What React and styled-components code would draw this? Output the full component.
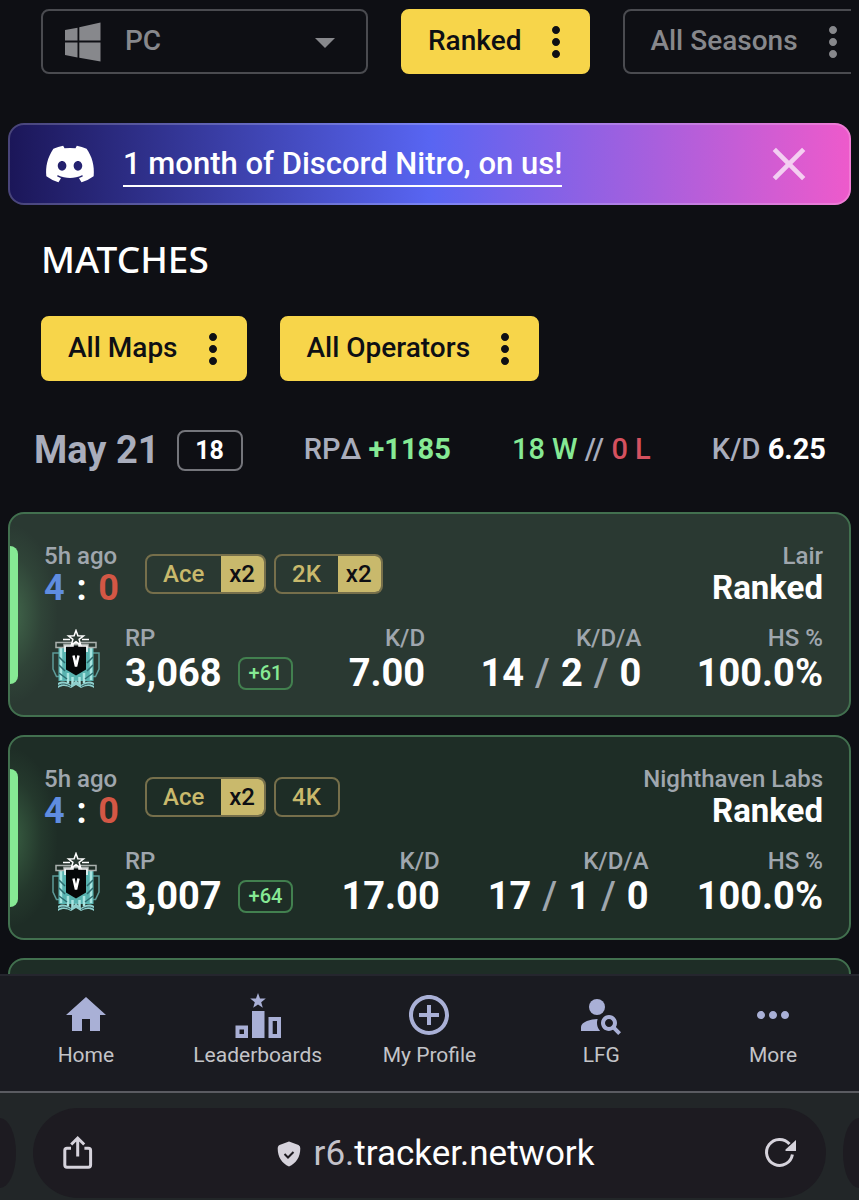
import React from "react";
import styled, { createGlobalStyle } from "styled-components";
import {
  MdAddCircleOutline,
  MdArrowDropDown,
  MdClose,
  MdHome,
  MdMoreHoriz,
  MdMoreVert,
  MdPersonSearch,
} from "react-icons/md";
import { FaDiscord } from "react-icons/fa6";

const GlobalStyle = createGlobalStyle`
  * { box-sizing: border-box; }
  body {
    margin: 0;
    background: #0e0f14;
    color: #fff;
    font-family: Roboto, "Liberation Sans", sans-serif;
  }
  button, select { font: inherit; color: inherit; }
  h1, h2, p, dl, dt, dd, ul { margin: 0; padding: 0; font-weight: inherit; }
`;

const Screen = styled.div`
  display: flex;
  flex-direction: column;
  height: 100vh;
`;

const Content = styled.main`
  flex: 1;
  min-height: 0;
  overflow-y: auto;
  scrollbar-width: none;
  padding: 9px 8px 0;
`;

/* Filters */

const FilterRow = styled.div`
  display: flex;
  gap: 33px;
  padding-left: 33px;
  overflow: hidden;
`;

const SelectBox = styled.label`
  display: flex;
  align-items: center;
  flex: none;
  position: relative;
  width: 327px;
  height: 65px;
  border: 2px solid #4a4b50;
  border-radius: 8px;
  color: #87888c;

  > svg:first-child { position: absolute; left: 22px; }
  > svg:last-child { position: absolute; right: 17px; }
  > svg { pointer-events: none; }
`;

const Select = styled.select`
  appearance: none;
  width: 100%;
  height: 100%;
  padding: 0 48px 2px 82px;
  border: 0;
  background: transparent;
  font-size: 28px;
  font-weight: 500;
`;

const FilterButton = styled.button`
  display: flex;
  align-items: center;
  gap: 11px;
  flex: none;
  height: 65px;
  padding: 0 8px 0 25px;
  border: 2px solid ${(p) => (p.$active ? "#f7d54a" : "#4a4b50")};
  border-radius: 8px;
  background: ${(p) => (p.$active ? "#f7d54a" : "transparent")};
  color: ${(p) => (p.$active ? "#0e0f14" : "#87888c")};
  font-size: 28px;
  font-weight: 500;
  line-height: 32px;
  white-space: nowrap;
`;

const FilterText = styled.span`
  padding-bottom: 2px;
`;

/* Promotion */

const Promo = styled.aside`
  display: flex;
  align-items: center;
  height: 82px;
  margin-top: 49px;
  padding: 0 32px 0 34px;
  border: 2px solid rgba(255, 255, 255, 0.2);
  border-radius: 16px;
  background: linear-gradient(90deg, #1b1658, #5865f2 50%, #ee5acb) border-box;
`;

const PromoLink = styled.a`
  margin-left: 27px;
  padding-top: 2px;
  border-bottom: 2px solid #fff;
  color: #fff;
  font-size: 31px;
  font-weight: 500;
  line-height: 42px;
  text-decoration: none;
`;

const CloseButton = styled.button`
  display: flex;
  margin-left: auto;
  padding: 0;
  border: 0;
  background: none;
  color: rgba(255, 255, 255, 0.7);
`;

/* Matches */

const Heading = styled.h1`
  margin: 30px 33px 33px;
  font-family: "Noto Sans", sans-serif;
  font-size: 37px;
  font-weight: 500;
  line-height: 48px;
`;

const DayRow = styled.header`
  display: flex;
  align-items: center;
  justify-content: space-between;
  margin: 48px 25px 41px 26px;
  font-size: 29px;
  line-height: 40px;
  white-space: nowrap;
`;

const Day = styled.h2`
  display: flex;
  align-items: center;
  gap: 17px;
  color: #a9adbc;
  font-size: 38px;
  font-weight: 700;
`;

const Count = styled.span`
  width: 66px;
  height: 41px;
  border: 2px solid #74757b;
  border-radius: 8px;
  color: #fff;
  font-size: 25px;
  line-height: 37px;
  text-align: center;
`;

const Tone = styled.span`
  color: ${(p) => p.$color};
  font-weight: ${(p) => p.$weight || 500};
`;

const DayStat = styled.p`
  padding-bottom: 2px;
  color: #a9adbc;
  font-weight: 500;
`;

const MatchList = styled.ul`
  display: flex;
  flex-direction: column;
  gap: 18px;
  list-style: none;
`;

const MatchCard = styled.li`
  position: relative;
  display: flex;
  flex-direction: column;
  gap: 18px;
  min-height: 205px;
  padding: 28px 26px 21px 34px;
  border: 2px solid #42704f;
  border-radius: 16px;
  background:
    radial-gradient(ellipse 48px 90px at 0 50%, rgba(134, 239, 148, 0.26), rgba(134, 239, 148, 0.06) 65%, transparent) no-repeat,
    ${(p) => (p.$bright ? "#2a3932" : "#1e2d26")};

  &::before {
    content: "";
    position: absolute;
    left: 0;
    top: 32px;
    bottom: 31px;
    width: 8px;
    border-radius: 0 8px 8px 0;
    background: #86e994;
  }
`;

const CardTop = styled.div`
  display: flex;
  align-items: center;
  line-height: 28px;
`;

const Muted = styled.p`
  color: #9fa6ad;
  font-size: 24px;
  font-weight: 500;
  line-height: 28px;
`;

const Summary = styled.div`
  width: 101px;
`;

const Score = styled.p`
  display: flex;
  justify-content: space-between;
  width: 75px;
  font-size: 36px;
  font-weight: 700;
  line-height: 36px;
`;

const Tags = styled.div`
  display: flex;
  gap: 8px;
`;

const Tag = styled.span`
  display: flex;
  height: 40px;
  overflow: hidden;
  border: 2px solid #766f4b;
  border-radius: 8px;
  color: #c9b96c;
  font-size: 24px;
  font-weight: 500;
  line-height: 36px;
`;

const TagName = styled.span`
  padding: 0 17px 0 16px;
`;

const TagCount = styled.span`
  padding: 0 9px 0 8px;
  background: #c9b96c;
  color: #0e0f14;
`;

const Place = styled.div`
  margin-left: auto;
  text-align: right;
`;

const Mode = styled.p`
  font-size: 33px;
  font-weight: 700;
  line-height: 36px;
`;

const CardBottom = styled.div`
  display: flex;
  align-items: center;
`;

const RankSlot = styled.div`
  display: flex;
  flex: none;
  justify-content: center;
  width: 64px;
  margin-right: 17px;
`;

const Stats = styled.dl`
  display: flex;
  flex: 1;
  justify-content: space-between;
`;

const Stat = styled.div`
  text-align: ${(p) => (p.$start ? "left" : "right")};
`;

const StatValue = styled.dd`
  display: flex;
  align-items: center;
  justify-content: flex-end;
  gap: ${(p) => p.$gap || 0}px;
  font-size: 38px;
  font-weight: 700;
  line-height: 42px;
`;

const Delta = styled.span`
  height: 33px;
  padding: 0 9px;
  border: 2px solid #42804f;
  border-radius: 8px;
  color: #86e994;
  font-size: 20px;
  font-weight: 500;
  line-height: 28px;
`;

/* Navigation */

const Nav = styled.nav`
  display: flex;
  flex: none;
  padding: 15px 0 22px;
  border-top: 2px solid #25262e;
  background: #1a1b21;
`;

const NavLink = styled.a`
  display: flex;
  flex: 1 1 0;
  flex-direction: column;
  align-items: center;
  gap: 2px;
  color: #c3c4c8;
  font-size: 21px;
  line-height: 28px;
  text-decoration: none;

  svg { color: #a9b0d6; }
`;

/* Browser address bar */

const BrowserBar = styled.footer`
  display: flex;
  flex: none;
  align-items: center;
  gap: 17px;
  height: 109px;
  padding-top: 12px;
  border-top: 2px solid #5a5b61;
  background: #222628;
`;

const TabEdge = styled.div`
  flex: none;
  width: 16px;
  height: 70px;
  border-radius: ${(p) => (p.$right ? "100% 0 0 100% / 50% 0 0 50%" : "0 100% 100% 0 / 0 50% 50% 0")};
  background: #1d1b21;
`;

const Address = styled.div`
  display: flex;
  flex: 1;
  align-items: center;
  justify-content: space-between;
  height: 90px;
  padding: 0 25px;
  border-radius: 45px;
  background: #1d1b21;
`;

const BarButton = styled.button`
  display: flex;
  padding: 0;
  border: 0;
  background: none;
  color: #d6d3dc;
`;

const Url = styled.p`
  display: flex;
  align-items: center;
  padding: 2px 0 0 12px;
  font-size: 35px;
  line-height: 40px;

  svg { margin-right: 13px; }
`;

const WindowsIcon = () => (
  <svg width="36" height="40" viewBox="0 0 36 40" fill="currentColor" aria-hidden="true">
    <path d="M0 8 12.500 5.700V18.500H0zM14.300 5.300 35.500 0.500V18.500H14.300zM0 20.500H12.500V35.400L0 33zM14.300 20.500H35.500V39.500L14.300 35.700z" />
  </svg>
);

const LeaderboardsIcon = () => (
  <svg width="48" height="48" viewBox="0 0 48 48" fill="currentColor" aria-hidden="true">
    <path d="M24 2l2 5.400 5.800.2-4.600 3.600 1.600 5.500L24 13.400l-4.800 3.300 1.600-5.500-4.600-3.600 5.800-.2z" />
    <path d="M18 20h12.500v27H18z" />
    <path fillRule="evenodd" d="M1.500 34.500H14V47H1.500zM5.500 38.500v4.500H10v-4.500zM34.500 26H47v21H34.500zM38.700 30v13h4.300V30z" />
  </svg>
);

const ShareIcon = () => (
  <svg width="40" height="40" viewBox="0 0 40 40" fill="none" stroke="currentColor" strokeWidth="3" aria-hidden="true">
    <path d="M13 15.200H9a2.200 2.200 0 0 0-2.200 2.200V32a2.200 2.200 0 0 0 2.200 2.200h21.400a2.200 2.200 0 0 0 2.200-2.200V17.400a2.200 2.200 0 0 0-2.200-2.200h-4M19.700 23.500V5M13.200 11.500l6.500-6.500 6.500 6.500" />
  </svg>
);

const ReloadIcon = () => (
  <svg width="40" height="40" viewBox="0 0 40 40" fill="none" aria-hidden="true">
    <path d="M31.400 21.500A13 13 0 1 1 28.500 11" stroke="currentColor" strokeWidth="3" />
    <path d="M35 7v11H24.500v-1.500z" fill="currentColor" />
  </svg>
);

const ShieldIcon = () => (
  <svg width="24" height="26" viewBox="0 0 24 26" aria-hidden="true">
    <path d="M12 .5 21.500 4Q23.500 5 23.300 7.500C23.300 16 19 22.500 12 25.500 5 22.500.7 16 .7 7.500.5 5 2.500 4 2.500 4z" fill="#d6d3dc" />
    <path d="m7.500 13 3.500 3.500 5.500-5.500" fill="none" stroke="#1d1b21" strokeWidth="2" />
  </svg>
);

const RankIcon = () => (
  <svg width="48" height="60" viewBox="0 0 48 60" fill="none" role="img" aria-label="Rank V">
    <path d="M8 24H1v16l3.500 7.500H8M40 24h7v16l-3.500 7.500H40" stroke="#5d9a98" strokeWidth="1.500" />
    <path d="M6.500 18h35v34h-35z" fill="#58b3b0" />
    <path d="M9 19v32M39 19v32M16 44v10M20.500 48v9M27.500 48v9M32 44v10" stroke="#a8e4e0" strokeWidth="2.500" />
    <path d="m7 28 6 6M7 36l6 6M7 44l8 6M41 28l-6 6M41 36l-6 6M41 44l-8 6" stroke="#2c6c70" strokeWidth="1.500" />
    <path d="M6 54c5-3 9-1 13 2l5-5 5 5c4-3 8-5 13-2v5c-5-3-9-2-13 0l-5-3-5 3c-4-2-8-3-13 0z" fill="#8fcfcd" />
    <path d="M6 56.500c5-3 9-1 13 1M42 56.500c-5-3-9-1-13 1" stroke="#2c5455" />
    <path d="M4 13.500h40v5H36v-3H12v3H4z" stroke="#aab1ae" strokeWidth="1.500" />
    <path d="M11 10.500h7M30 10.500h7" stroke="#fff" strokeWidth="1.500" />
    <path d="M14 17h20v23.500l-10 6-10-6z" fill="#050708" />
    <path d="M13 23v-6h8v-3h6v3h8v6" stroke="#fff" strokeWidth="1.500" />
    <path d="m24 1.500 1.900 5.300 5.600.2-4.400 3.400 1.500 5.400-4.600-3.100-4.600 3.100 1.500-5.400L16.500 7l5.600-.2z" fill="#2a3932" stroke="#fff" strokeWidth="1.500" />
    <path d="m21.500 26.500 2.500 11 2.500-11" stroke="#fff" strokeWidth="2.500" />
  </svg>
);

const Filter = ({ active, children }) => (
  <FilterButton type="button" $active={active}>
    <FilterText>{children}</FilterText>
    <MdMoreVert size={48} aria-hidden="true" />
  </FilterButton>
);

const matches = [
  { map: "Lair", tags: [["Ace", "x2"], ["2K", "x2"]], rp: "3,068", delta: "+61", kd: "7.00", kda: [14, 2, 0], hs: "100.0%" },
  { map: "Nighthaven Labs", tags: [["Ace", "x2"], ["4K"]], rp: "3,007", delta: "+64", kd: "17.00", kda: [17, 1, 0], hs: "100.0%" },
  null,
];

const Match = ({ match, bright }) => (
  <MatchCard $bright={bright}>
    {match && (
      <>
        <CardTop>
          <Summary>
            <Muted>5h ago</Muted>
            <Score>
              <Tone $color="#5f8de0" $weight={700}>4</Tone>
              <span>:</span>
              <Tone $color="#d35745" $weight={700}>0</Tone>
            </Score>
          </Summary>
          <Tags>
            {match.tags.map(([name, count]) => (
              <Tag key={name}>
                <TagName>{name}</TagName>
                {count && <TagCount>{count}</TagCount>}
              </Tag>
            ))}
          </Tags>
          <Place>
            <Muted>{match.map}</Muted>
            <Mode>Ranked</Mode>
          </Place>
        </CardTop>
        <CardBottom>
          <RankSlot><RankIcon /></RankSlot>
          <Stats>
            <Stat $start>
              <Muted as="dt">RP</Muted>
              <StatValue $gap={16}>
                {match.rp}
                <Delta>{match.delta}</Delta>
              </StatValue>
            </Stat>
            <Stat>
              <Muted as="dt">K/D</Muted>
              <StatValue>{match.kd}</StatValue>
            </Stat>
            <Stat>
              <Muted as="dt">K/D/A</Muted>
              <StatValue $gap={11}>
                <span>{match.kda[0]}</span>
                <Tone $color="#9fa6ad">/</Tone>
                <span>{match.kda[1]}</span>
                <Tone $color="#9fa6ad">/</Tone>
                <span>{match.kda[2]}</span>
              </StatValue>
            </Stat>
            <Stat>
              <Muted as="dt">HS %</Muted>
              <StatValue>{match.hs}</StatValue>
            </Stat>
          </Stats>
        </CardBottom>
      </>
    )}
  </MatchCard>
);

export default function App() {
  return (
    <Screen>
      <GlobalStyle />
      <Content>
        <FilterRow>
          <SelectBox>
            <WindowsIcon />
            <Select aria-label="Platform" defaultValue="PC">
              <option>PC</option>
            </Select>
            <MdArrowDropDown size={48} aria-hidden="true" />
          </SelectBox>
          <Filter active>Ranked</Filter>
          <Filter>All Seasons</Filter>
        </FilterRow>

        <Promo>
          <FaDiscord size={52} aria-hidden="true" />
          <PromoLink href="#nitro">1 month of Discord Nitro, on us!</PromoLink>
          <CloseButton type="button" aria-label="Close">
            <MdClose size={56} />
          </CloseButton>
        </Promo>

        <Heading>MATCHES</Heading>
        <FilterRow>
          <Filter active>All Maps</Filter>
          <Filter active>All Operators</Filter>
        </FilterRow>

        <DayRow>
          <Day>
            May 21
            <Count>18</Count>
          </Day>
          <DayStat>RPΔ <Tone $color="#86e994" $weight={700}>+1185</Tone></DayStat>
          <DayStat>
            <Tone $color="#86e994">18 W</Tone> // <Tone $color="#d4515f">0 L</Tone>
          </DayStat>
          <DayStat>K/D <Tone $color="#fff" $weight={700}>6.25</Tone></DayStat>
        </DayRow>

        <MatchList>
          {matches.map((match, i) => (
            <Match key={i} match={match} bright={i === 0} />
          ))}
        </MatchList>
      </Content>

      <Nav>
        <NavLink href="#home"><MdHome size={48} />Home</NavLink>
        <NavLink href="#leaderboards"><LeaderboardsIcon />Leaderboards</NavLink>
        <NavLink href="#profile"><MdAddCircleOutline size={48} />My Profile</NavLink>
        <NavLink href="#lfg"><MdPersonSearch size={48} />LFG</NavLink>
        <NavLink href="#more"><MdMoreHoriz size={48} />More</NavLink>
      </Nav>

      <BrowserBar>
        <TabEdge />
        <Address>
          <BarButton type="button" aria-label="Share"><ShareIcon /></BarButton>
          <Url>
            <ShieldIcon />
            <Tone $color="#c4c2ca" $weight={400}>r6.</Tone>
            tracker.network
          </Url>
          <BarButton type="button" aria-label="Reload"><ReloadIcon /></BarButton>
        </Address>
        <TabEdge $right />
      </BrowserBar>
    </Screen>
  );
}
